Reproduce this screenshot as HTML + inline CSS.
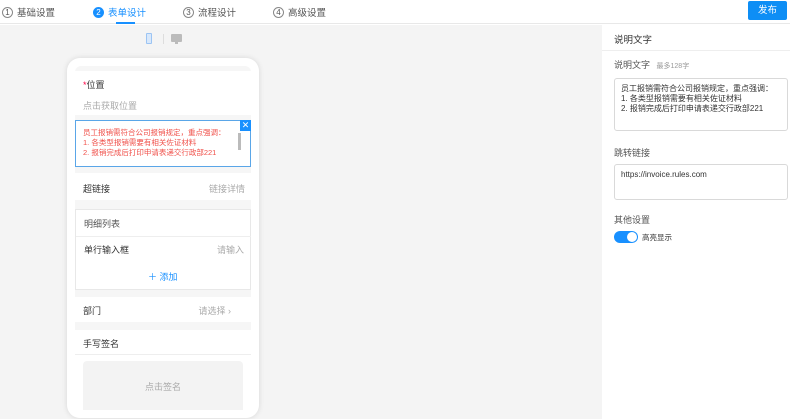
<!DOCTYPE html>
<html><head><meta charset="utf-8"><style>
*{box-sizing:border-box;margin:0;padding:0}
body{width:790px;height:419px;overflow:hidden;font-family:"Liberation Sans","Noto Sans CJK SC",sans-serif;font-size:9px;color:#333;background:#fff;position:relative}
.abs{position:absolute}
.hdr{left:0;top:0;width:790px;height:24px;border-bottom:1px solid #e8e8e8;background:#fff}
.step{top:5px;font-size:9.5px;color:#555;display:flex;align-items:center}
.num{width:11px;height:11px;border:1px solid #888;border-radius:50%;font-size:8px;display:inline-flex;align-items:center;justify-content:center;margin-right:4px}
.canvas{left:0;top:25px;width:602px;height:394px;background:#f4f4f4}
.phone{left:67px;top:58px;width:192px;height:360px;background:#fff;border-radius:13px;box-shadow:0 0 6px rgba(0,0,0,.12)}
.inner{left:75px;top:66px;width:176px;height:344px;background:#f6f6f6;overflow:hidden;border-radius:6px 6px 0 0}
.sec{position:absolute;left:0;width:176px;background:#fff}
.t{position:absolute;font-size:9px;color:#333}
.g{color:#aaa}
.right{left:602px;top:25px;width:188px;height:394px;background:#fff}
.ta{position:absolute;border:1px solid #d9d9d9;border-radius:3px;font-size:8px;line-height:10px;padding:5px 6px;color:#333}
</style></head><body>
<div class="abs hdr"></div>
<div class="abs step" style="left:2px"><span class="num">1</span>基础设置</div>
<div class="abs step" style="left:93px;color:#1890ff"><span class="num" style="background:#1890ff;border-color:#1890ff;color:#fff">2</span>表单设计</div>
<div class="abs" style="left:116px;top:22px;width:19px;height:2px;background:#1890ff"></div>
<div class="abs step" style="left:183px"><span class="num">3</span>流程设计</div>
<div class="abs step" style="left:273px"><span class="num">4</span>高级设置</div>
<div class="abs" style="left:748px;top:1px;width:39px;height:19px;background:#0e8ef5;color:#fff;font-size:9.5px;text-align:center;line-height:19px;border-radius:2px">发布</div>

<div class="abs canvas"></div>
<div class="abs" style="left:146px;top:33px;width:6px;height:11px;border:1px solid #9cc4f3;background:#d8e8fb;border-radius:1px"></div>
<div class="abs" style="left:163px;top:34px;width:1px;height:10px;background:#ddd"></div>
<div class="abs" style="left:171px;top:34px;width:11px;height:8px;background:#bbb;border-radius:1px"></div>
<div class="abs" style="left:175px;top:42px;width:3px;height:2px;background:#bbb"></div>

<div class="abs phone"></div>
<div class="abs inner">
 <div class="sec" style="top:5px;height:44px"><span class="t" style="left:8px;top:7px"><span style="color:#f04">*</span>位置</span><span class="t g" style="left:8px;top:28px">点击获取位置</span></div>
 <div class="sec" style="top:54px;height:47px;border:1px solid #5aa6e8;background:#fff">
  <div class="t" style="left:7px;top:7px;color:#f0504a;font-size:7.5px;line-height:10px">员工报销需符合公司报销规定，重点强调：<br>1. 各类型报销需要有相关佐证材料<br>2. 报销完成后打印申请表递交行政部221</div>
  <div class="abs" style="right:-1px;top:-1px;width:11px;height:11px;background:#1890ff;color:#fff;font-size:9px;line-height:10px;text-align:center">✕</div>
  <div class="abs" style="left:162px;top:12px;width:3px;height:17px;background:#bbb"></div>
 </div>
 <div class="sec" style="top:107px;height:27px"><span class="t" style="left:8px;top:9px">超链接</span><span class="t g" style="right:6px;top:9px">链接详情</span></div>
 <div class="sec" style="top:143px;height:81px;border:1px solid #e8e8e8">
  <span class="t" style="left:8px;top:7px;color:#555">明细列表</span>
  <div class="abs" style="left:0;top:26px;width:176px;height:1px;background:#eee"></div>
  <span class="t" style="left:8px;top:33px">单行输入框</span><span class="t g" style="right:6px;top:33px">请输入</span>
  <span class="t" style="left:72px;top:60px;color:#1890ff">＋ 添加</span>
 </div>
 <div class="sec" style="top:231px;height:25px"><span class="t" style="left:8px;top:7px">部门</span><span class="t g" style="right:20px;top:7px">请选择 ›</span></div>
 <div class="sec" style="top:264px;height:90px">
  <span class="t" style="left:8px;top:7px">手写签名</span>
  <div class="abs" style="left:0;top:24px;width:176px;height:1px;background:#eee"></div>
  <div class="abs" style="left:8px;top:31px;width:160px;height:60px;background:#f3f3f3;border-radius:4px"></div>
  <span class="t g" style="left:70px;top:50px">点击签名</span>
 </div>
</div>

<div class="abs right">
 <div class="t" style="left:12px;top:7px;font-size:9.5px">说明文字</div>
 <div class="abs" style="left:0;top:25px;width:188px;height:1px;background:#eee"></div>
 <div class="t" style="left:12px;top:33px;color:#555">说明文字 <span style="font-size:7px;color:#999;margin-left:4px">最多128字</span></div>
 <div class="ta" style="left:12px;top:53px;width:174px;height:53px">员工报销需符合公司报销规定，重点强调：<br>1. 各类型报销需要有相关佐证材料<br>2. 报销完成后打印申请表递交行政部221</div>
 <div class="t" style="left:12px;top:121px;color:#555">跳转链接</div>
 <div class="ta" style="left:12px;top:139px;width:174px;height:36px">https://invoice.rules.com</div>
 <div class="t" style="left:12px;top:188px;color:#555">其他设置</div>
 <div class="abs" style="left:12px;top:206px;width:24px;height:12px;background:#1890ff;border-radius:6px"></div>
 <div class="abs" style="left:25px;top:207px;width:10px;height:10px;background:#fff;border-radius:50%"></div>
 <div class="t" style="left:40px;top:207px;font-size:7.5px">高亮显示</div>
</div>
</body></html>
